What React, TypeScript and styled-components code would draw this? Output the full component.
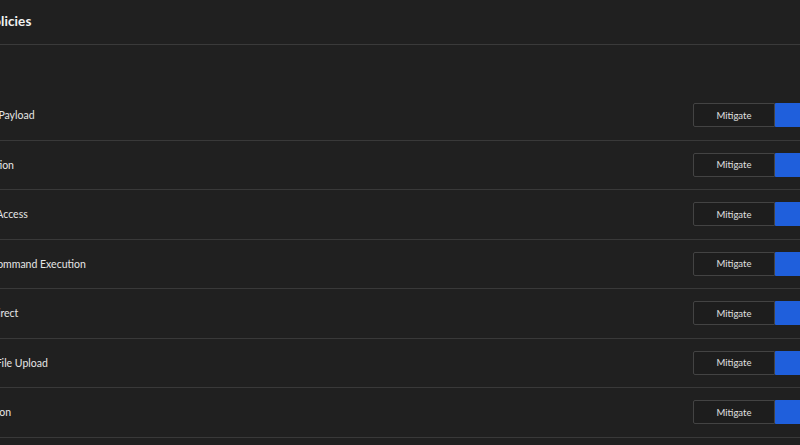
import React from "react";
import styled, { createGlobalStyle } from "styled-components";

const GlobalStyle = createGlobalStyle`
  html, body {
    margin: 0;
    padding: 0;
    background: #202020;
    overflow: hidden;
  }
  body {
    font-family: "Lato", "Noto Sans", sans-serif;
    color: #e2e2e2;
  }
`;

/* the view is scrolled sideways: the panel is wider than the window */
const Panel = styled.div`
  width: 928px;
  margin-left: -48px;
  padding-right: 23px;
  box-sizing: border-box;
  background: #202020;
  min-height: 445px;
`;

const Header = styled.header`
  height: 45px;
  box-sizing: border-box;
  display: flex;
  align-items: center;
  padding-left: 33px;
  padding-bottom: 2px;
  margin-right: -23px;
  border-bottom: 1px solid #3a3a3a;

  h1 {
    margin: 0;
    font-size: 13.5px;
    font-weight: 700;
    color: #f2f2f2;
    letter-spacing: 0.1px;
  }
`;

const List = styled.ul`
  list-style: none;
  margin: 0;
  padding: 46px 0 0;
`;

const Row = styled.li`
  height: 49.5px;
  box-sizing: border-box;
  display: flex;
  align-items: center;
  justify-content: space-between;
  border-bottom: 1px solid #393939;
  margin-right: -23px;
  padding-right: 23px;
`;

const Label = styled.span`
  font-size: 10.5px;
  color: #e6e6e6;
  white-space: nowrap;
`;

const Segmented = styled.div`
  display: flex;
  height: 24px;
`;

const Segment = styled.button<{ $active?: boolean }>`
  width: 82px;
  height: 100%;
  box-sizing: border-box;
  font-family: "Lato", "Noto Sans", sans-serif;
  font-size: 9.5px;
  padding: 0;
  cursor: pointer;
  color: ${(p) => (p.$active ? "#ffffff" : "#e0e0e0")};
  background: ${(p) => (p.$active ? "#1f5fdc" : "#1d1d1d")};
  border: 1px solid ${(p) => (p.$active ? "#1f5fdc" : "#434343")};
  border-radius: ${(p) => (p.$active ? "0 2px 2px 0" : "2px 0 0 2px")};
`;

const rules = [
  "Malicious Payload",
  "SQL Injection",
  "Improper Access",
  "Remote Command Execution",
  "Open Redirect",
  "Arbitrary File Upload",
  "Log Injection",
];

export default function App() {
  return (
    <>
      <GlobalStyle />
      <Panel>
        <Header>
          <h1>Policies</h1>
        </Header>
        <List>
          {rules.map((r) => (
            <Row key={r}>
              <Label>{r}</Label>
              <Segmented>
                <Segment>Mitigate</Segment>
                <Segment $active>Block</Segment>
              </Segmented>
            </Row>
          ))}
        </List>
      </Panel>
    </>
  );
}
